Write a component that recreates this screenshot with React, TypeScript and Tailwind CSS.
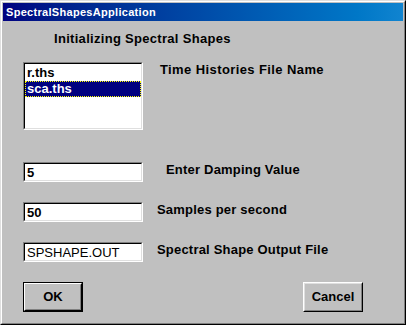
import React from "react";

const font = { fontFamily: '"Liberation Sans", Arial, sans-serif' };

const sunken =
  "border border-t-[#808080] border-l-[#808080] border-r-white border-b-white";
const sunkenInner =
  "border border-t-black border-l-black border-r-[#dfdfdf] border-b-[#dfdfdf] bg-white";

function Edit({ value, bold }: { value: string; bold?: boolean }) {
  return (
    <div className={`w-[120px] h-[20px] ${sunken}`}>
      <div className={`w-[118px] h-[18px] ${sunkenInner} flex items-center pl-[2px]`}>
        <span className={`text-[13px] leading-[15px] text-black ${bold ? "font-bold" : ""}`}>{value}</span>
      </div>
    </div>
  );
}

export default function App() {
  return (
    <div className="w-[406px] h-[325px] bg-[#c0c0c0]" style={font}>
      <div className="w-full h-full border border-t-[#dfdfdf] border-l-[#dfdfdf] border-r-black border-b-black">
        <div className="w-full h-full border border-t-white border-l-white border-r-[#808080] border-b-[#808080] p-[1px] flex flex-col">
          <div className="h-[18px] bg-gradient-to-r from-[#000080] to-[#1084d0] flex items-center pl-[3px]">
            <span className="text-white font-bold text-[11px] leading-[18px] tracking-[0.3px]">SpectralShapesApplication</span>
          </div>
          <div className="flex flex-col pl-[20px] text-black">
            <div className="mt-[10px] ml-[31px] h-[15px] text-[13px] leading-[15px] font-bold tracking-[0.3px]">
              Initializing Spectral Shapes
            </div>
            <div className="mt-[16px] grid grid-cols-[120px_1fr] gap-x-[17px] items-start">
              <div className={`w-[120px] h-[68px] ${sunken}`}>
                <div className={`w-[118px] h-[66px] ${sunkenInner} pt-[1px]`}>
                  <div className="w-[116px] h-[16px] pl-[2px] text-[13px] leading-[16px] font-bold">r.ths</div>
                  <div className="w-[116px] h-[16px] bg-[#000080] border border-dotted border-[#ffff00] pl-[1px] text-[13px] leading-[14px] font-bold text-white">sca.ths</div>
                </div>
              </div>
              <div className="text-[13px] leading-[15px] font-bold tracking-[0.4px]">Time Histories File Name</div>
            </div>
            <div className="mt-[32px] grid grid-cols-[120px_1fr] gap-x-[23px] items-start">
              <Edit value="5" bold />
              <div className="text-[13px] leading-[15px] font-bold tracking-[0.2px]">Enter Damping Value</div>
            </div>
            <div className="mt-[20px] grid grid-cols-[120px_1fr] gap-x-[14px] items-start">
              <Edit value="50" bold />
              <div className="text-[13px] leading-[15px] font-bold tracking-[0.2px]">Samples per second</div>
            </div>
            <div className="mt-[20px] grid grid-cols-[120px_1fr] gap-x-[14px] items-start">
              <Edit value="SPSHAPE.OUT" />
              <div className="text-[13px] leading-[15px] font-bold tracking-[0.2px]">Spectral Shape Output File</div>
            </div>
            <div className="mt-[20px] flex w-[340px] justify-between">
              <div className="w-[60px] h-[30px] border border-black">
                <div className="w-full h-full border border-t-white border-l-white border-r-black border-b-black">
                  <div className="w-full h-full border border-t-[#c0c0c0] border-l-[#c0c0c0] border-r-[#808080] border-b-[#808080] flex items-center justify-center text-[13px] font-bold">
                    OK
                  </div>
                </div>
              </div>
              <div className="w-[60px] h-[30px] border border-t-white border-l-white border-r-black border-b-black">
                <div className="w-full h-full border border-t-[#dfdfdf] border-l-[#dfdfdf] border-r-[#808080] border-b-[#808080] flex items-center justify-center text-[13px] font-bold">
                  Cancel
                </div>
              </div>
            </div>
          </div>
        </div>
      </div>
    </div>
  );
}
